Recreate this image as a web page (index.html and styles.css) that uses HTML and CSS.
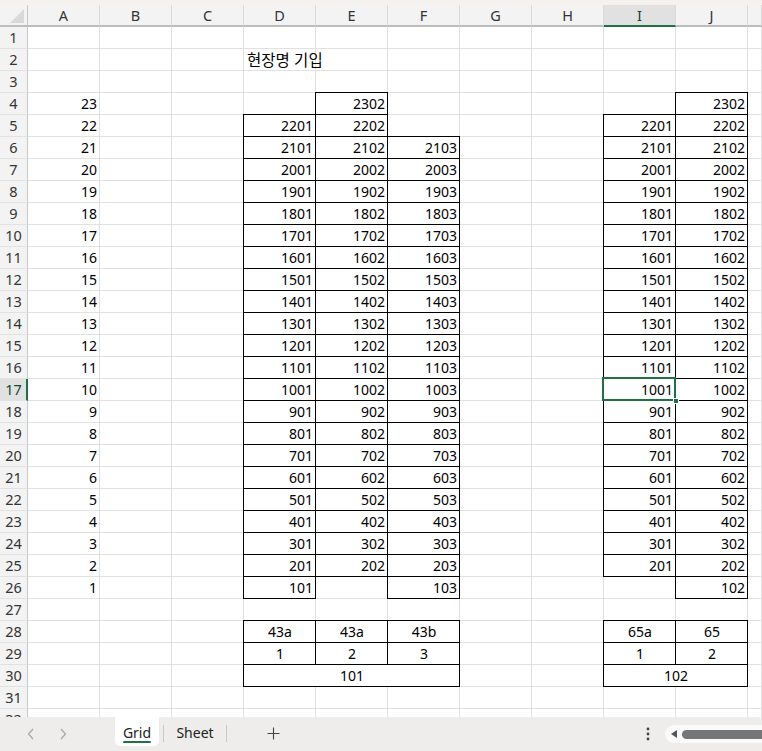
FILE: index.html
```html
<!DOCTYPE html>
<html lang="ko">
<head>
<meta charset="utf-8">
<title>Grid</title>
<link rel="stylesheet" href="styles.css">
</head>
<body>
<div class="app">
  <div class="strip"></div>
  <div class="sheet">
    <div class="corner"><svg width="14" height="14" viewBox="0 0 14 14"><polygon points="14,0 14,14 0,14" fill="#d9d9d9"/></svg></div>
    <div class="ch">A</div><div class="ch">B</div><div class="ch">C</div><div class="ch">D</div><div class="ch">E</div><div class="ch">F</div><div class="ch">G</div><div class="ch">H</div><div class="ch on">I</div><div class="ch">J</div><div class="ch"></div>

    <div class="rh">1</div><div class="c"></div><div class="c"></div><div class="c"></div><div class="c"></div><div class="c"></div><div class="c"></div><div class="c"></div><div class="c"></div><div class="c"></div><div class="c"></div><div class="c"></div>
    <div class="rh">2</div><div class="c"></div><div class="c"></div><div class="c"></div><div class="c t"><span class="ko">현장명 기입</span></div><div class="c"></div><div class="c"></div><div class="c"></div><div class="c"></div><div class="c"></div><div class="c"></div><div class="c"></div>
    <div class="rh">3</div><div class="c"></div><div class="c"></div><div class="c"></div><div class="c"></div><div class="c"></div><div class="c"></div><div class="c"></div><div class="c"></div><div class="c"></div><div class="c"></div><div class="c"></div>
    <div class="rh">4</div><div class="c n">23</div><div class="c"></div><div class="c"></div><div class="c"></div><div class="c n b">2302</div><div class="c"></div><div class="c"></div><div class="c"></div><div class="c"></div><div class="c n b">2302</div><div class="c"></div>
    <div class="rh">5</div><div class="c n">22</div><div class="c"></div><div class="c"></div><div class="c n b">2201</div><div class="c n b">2202</div><div class="c"></div><div class="c"></div><div class="c"></div><div class="c n b">2201</div><div class="c n b">2202</div><div class="c"></div>
    <div class="rh">6</div><div class="c n">21</div><div class="c"></div><div class="c"></div><div class="c n b">2101</div><div class="c n b">2102</div><div class="c n b">2103</div><div class="c"></div><div class="c"></div><div class="c n b">2101</div><div class="c n b">2102</div><div class="c"></div>
    <div class="rh">7</div><div class="c n">20</div><div class="c"></div><div class="c"></div><div class="c n b">2001</div><div class="c n b">2002</div><div class="c n b">2003</div><div class="c"></div><div class="c"></div><div class="c n b">2001</div><div class="c n b">2002</div><div class="c"></div>
    <div class="rh">8</div><div class="c n">19</div><div class="c"></div><div class="c"></div><div class="c n b">1901</div><div class="c n b">1902</div><div class="c n b">1903</div><div class="c"></div><div class="c"></div><div class="c n b">1901</div><div class="c n b">1902</div><div class="c"></div>
    <div class="rh">9</div><div class="c n">18</div><div class="c"></div><div class="c"></div><div class="c n b">1801</div><div class="c n b">1802</div><div class="c n b">1803</div><div class="c"></div><div class="c"></div><div class="c n b">1801</div><div class="c n b">1802</div><div class="c"></div>
    <div class="rh">10</div><div class="c n">17</div><div class="c"></div><div class="c"></div><div class="c n b">1701</div><div class="c n b">1702</div><div class="c n b">1703</div><div class="c"></div><div class="c"></div><div class="c n b">1701</div><div class="c n b">1702</div><div class="c"></div>
    <div class="rh">11</div><div class="c n">16</div><div class="c"></div><div class="c"></div><div class="c n b">1601</div><div class="c n b">1602</div><div class="c n b">1603</div><div class="c"></div><div class="c"></div><div class="c n b">1601</div><div class="c n b">1602</div><div class="c"></div>
    <div class="rh">12</div><div class="c n">15</div><div class="c"></div><div class="c"></div><div class="c n b">1501</div><div class="c n b">1502</div><div class="c n b">1503</div><div class="c"></div><div class="c"></div><div class="c n b">1501</div><div class="c n b">1502</div><div class="c"></div>
    <div class="rh">13</div><div class="c n">14</div><div class="c"></div><div class="c"></div><div class="c n b">1401</div><div class="c n b">1402</div><div class="c n b">1403</div><div class="c"></div><div class="c"></div><div class="c n b">1401</div><div class="c n b">1402</div><div class="c"></div>
    <div class="rh">14</div><div class="c n">13</div><div class="c"></div><div class="c"></div><div class="c n b">1301</div><div class="c n b">1302</div><div class="c n b">1303</div><div class="c"></div><div class="c"></div><div class="c n b">1301</div><div class="c n b">1302</div><div class="c"></div>
    <div class="rh">15</div><div class="c n">12</div><div class="c"></div><div class="c"></div><div class="c n b">1201</div><div class="c n b">1202</div><div class="c n b">1203</div><div class="c"></div><div class="c"></div><div class="c n b">1201</div><div class="c n b">1202</div><div class="c"></div>
    <div class="rh">16</div><div class="c n">11</div><div class="c"></div><div class="c"></div><div class="c n b">1101</div><div class="c n b">1102</div><div class="c n b">1103</div><div class="c"></div><div class="c"></div><div class="c n b">1101</div><div class="c n b">1102</div><div class="c"></div>
    <div class="rh on">17</div><div class="c n">10</div><div class="c"></div><div class="c"></div><div class="c n b">1001</div><div class="c n b">1002</div><div class="c n b">1003</div><div class="c"></div><div class="c"></div><div class="c n b sel">1001<span class="selbox"></span><span class="handle"></span></div><div class="c n b">1002</div><div class="c"></div>
    <div class="rh">18</div><div class="c n">9</div><div class="c"></div><div class="c"></div><div class="c n b">901</div><div class="c n b">902</div><div class="c n b">903</div><div class="c"></div><div class="c"></div><div class="c n b">901</div><div class="c n b">902</div><div class="c"></div>
    <div class="rh">19</div><div class="c n">8</div><div class="c"></div><div class="c"></div><div class="c n b">801</div><div class="c n b">802</div><div class="c n b">803</div><div class="c"></div><div class="c"></div><div class="c n b">801</div><div class="c n b">802</div><div class="c"></div>
    <div class="rh">20</div><div class="c n">7</div><div class="c"></div><div class="c"></div><div class="c n b">701</div><div class="c n b">702</div><div class="c n b">703</div><div class="c"></div><div class="c"></div><div class="c n b">701</div><div class="c n b">702</div><div class="c"></div>
    <div class="rh">21</div><div class="c n">6</div><div class="c"></div><div class="c"></div><div class="c n b">601</div><div class="c n b">602</div><div class="c n b">603</div><div class="c"></div><div class="c"></div><div class="c n b">601</div><div class="c n b">602</div><div class="c"></div>
    <div class="rh">22</div><div class="c n">5</div><div class="c"></div><div class="c"></div><div class="c n b">501</div><div class="c n b">502</div><div class="c n b">503</div><div class="c"></div><div class="c"></div><div class="c n b">501</div><div class="c n b">502</div><div class="c"></div>
    <div class="rh">23</div><div class="c n">4</div><div class="c"></div><div class="c"></div><div class="c n b">401</div><div class="c n b">402</div><div class="c n b">403</div><div class="c"></div><div class="c"></div><div class="c n b">401</div><div class="c n b">402</div><div class="c"></div>
    <div class="rh">24</div><div class="c n">3</div><div class="c"></div><div class="c"></div><div class="c n b">301</div><div class="c n b">302</div><div class="c n b">303</div><div class="c"></div><div class="c"></div><div class="c n b">301</div><div class="c n b">302</div><div class="c"></div>
    <div class="rh">25</div><div class="c n">2</div><div class="c"></div><div class="c"></div><div class="c n b">201</div><div class="c n b">202</div><div class="c n b">203</div><div class="c"></div><div class="c"></div><div class="c n b">201</div><div class="c n b">202</div><div class="c"></div>
    <div class="rh">26</div><div class="c n">1</div><div class="c"></div><div class="c"></div><div class="c n b">101</div><div class="c"></div><div class="c n b">103</div><div class="c"></div><div class="c"></div><div class="c"></div><div class="c n b">102</div><div class="c"></div>
    <div class="rh">27</div><div class="c"></div><div class="c"></div><div class="c"></div><div class="c"></div><div class="c"></div><div class="c"></div><div class="c"></div><div class="c"></div><div class="c"></div><div class="c"></div><div class="c"></div>
    <div class="rh">28</div><div class="c"></div><div class="c"></div><div class="c"></div><div class="c m b">43a</div><div class="c m b">43a</div><div class="c m b">43b</div><div class="c"></div><div class="c"></div><div class="c m b">65a</div><div class="c m b">65</div><div class="c"></div>
    <div class="rh">29</div><div class="c"></div><div class="c"></div><div class="c"></div><div class="c m b">1</div><div class="c m b">2</div><div class="c m b">3</div><div class="c"></div><div class="c"></div><div class="c m b">1</div><div class="c m b">2</div><div class="c"></div>
    <div class="rh">30</div><div class="c"></div><div class="c"></div><div class="c"></div><div class="c m b span3">101</div><div class="c"></div><div class="c"></div><div class="c m b span2">102</div><div class="c"></div>
    <div class="rh">31</div><div class="c"></div><div class="c"></div><div class="c"></div><div class="c"></div><div class="c"></div><div class="c"></div><div class="c"></div><div class="c"></div><div class="c"></div><div class="c"></div><div class="c"></div>
    <div class="rh">32</div><div class="c"></div><div class="c"></div><div class="c"></div><div class="c"></div><div class="c"></div><div class="c"></div><div class="c"></div><div class="c"></div><div class="c"></div><div class="c"></div><div class="c"></div>
  </div>
  <div class="tabbar">
    <div class="nav">
      <span class="arrow"><svg width="8" height="12" viewBox="0 0 8 12"><polyline points="6,1 1.5,6 6,11" fill="none" stroke="#a6a6a6" stroke-width="1.2"/></svg></span>
      <span class="arrow"><svg width="8" height="12" viewBox="0 0 8 12"><polyline points="2,1 6.5,6 2,11" fill="none" stroke="#a6a6a6" stroke-width="1.2"/></svg></span>
    </div>
    <div class="tab active">Grid</div>
    <div class="sep"></div>
    <div class="tab">Sheet</div>
    <div class="sep"></div>
    <div class="plus"><svg width="13" height="13" viewBox="0 0 13 13"><path d="M6.5 0.5v12M0.5 6.5h12" stroke="#444" stroke-width="1.1" fill="none"/></svg></div>
    <div class="more"><svg width="4" height="14" viewBox="0 0 4 14"><circle cx="2" cy="2" r="1.4" fill="#444"/><circle cx="2" cy="7" r="1.4" fill="#444"/><circle cx="2" cy="12" r="1.4" fill="#444"/></svg></div>
    <div class="hscroll">
      <svg class="tri" width="6" height="8" viewBox="0 0 6 8"><polygon points="6,0 6,8 0,4" fill="#555"/></svg>
      <div class="thumb"></div>
    </div>
  </div>
</div>
</body>
</html>
```

FILE: styles.css
```css
* { box-sizing: border-box; }
html, body { margin: 0; padding: 0; background: #fff; }
body { width: 762px; height: 751px; overflow: hidden; font-family: "Noto Sans", "Noto Sans CJK KR", sans-serif; color: #000; }

.app { display: flex; flex-direction: column; height: 751px; }
.strip { height: 5px; background: #f5f1ee; flex: none; }

.sheet {
  flex: 1;
  overflow: hidden;
  display: grid;
  grid-template-columns: 28px repeat(10, 72px) 14px;
  grid-auto-rows: 22px;
}

.corner {
  background: #f3f3f3;
  border-right: 1px solid #c8c8c8;
  border-bottom: 2px solid #bdbdbd;
  display: flex; align-items: flex-end; justify-content: flex-end;
  padding: 0 3px 2px 0;
}
.corner svg { display: block; }

.ch {
  background: #f3f3f3;
  border-right: 1px solid #dadada;
  border-bottom: 2px solid #bdbdbd;
  font-size: 14.5px;
  line-height: 20px;
  text-align: center;
  color: #333;
}
.ch.on { background: #e1e1e1; border-bottom-color: #1e7145; color: #0f4a2c; }

.rh {
  background: #f3f3f3;
  border-right: 1px solid #c8c8c8;
  border-bottom: 1px solid #e1e1e1;
  font-size: 14.5px;
  line-height: 21px;
  text-align: center;
  color: #333;
}
.rh.on { background: #e1e1e1; border-right: 2px solid #1e7145; color: #0f4a2c; padding-left: 1px; }

.c {
  border-right: 1px solid #e1e1e1;
  border-bottom: 1px solid #e1e1e1;
  font-size: 14px;
  line-height: 21px;
  padding: 0 2px 0 3px;
  white-space: nowrap;
  position: relative;
}
.n { text-align: right; }
.m { text-align: center; }
.t { text-align: left; overflow: visible; }
.ko { font-family: "Noto Sans CJK KR", "Noto Sans", sans-serif; font-size: 15.5px; position: relative; }

.b {
  border-right-color: #000;
  border-bottom-color: #000;
  box-shadow: -1px 0 0 #000, 0 -1px 0 #000, -1px -1px 0 #000;
}

.span3 { grid-column: span 3; }
.span2 { grid-column: span 2; }

.sel { z-index: 2; }
.selbox {
  position: absolute;
  left: -2px; top: -2px; right: -1px; bottom: -1px;
  border: 2px solid #1e7145;
  pointer-events: none;
}
.handle {
  position: absolute;
  right: -4px; bottom: -4px;
  width: 6px; height: 6px;
  background: #1e7145;
  border: 1px solid #fff;
}

.tabbar {
  flex: none;
  height: 34px;
  background: #eeedeb;
  display: flex;
  align-items: flex-start;
  font-size: 14px;
  color: #222;
}
.nav { width: 115px; height: 34px; display: flex; align-items: center; padding-left: 27px; gap: 24px; }
.arrow { width: 8px; height: 12px; display: block; }
.arrow svg { display: block; }

.tab { height: 29px; line-height: 31px; padding: 0; text-align: center; }
.tab.active {
  width: 44px;
  background: #fff;
  border-radius: 0 0 5px 5px;
  position: relative;
}
.tab.active::after {
  content: "";
  position: absolute;
  left: 8px; right: 8px; top: 24px;
  height: 2px;
  background: #1e7145;
  border-radius: 1px;
}
.tab:not(.active) { width: 62px; }
.sep { width: 1px; height: 17px; margin-top: 8px; background: #c8c8c8; }
.tab.active + .sep { margin-left: 4px; }
.plus { margin-left: 40px; margin-top: 10px; }
.plus svg { display: block; }
.more { margin-left: auto; margin-top: 10px; margin-right: 15px; }
.more svg { display: block; }
.hscroll {
  width: 97px;
  height: 18px;
  margin-top: 8px;
  background: #fafafa;
  border-radius: 9px 0 0 9px;
  display: flex;
  align-items: center;
  padding-left: 6px;
}
.tri { display: block; flex: none; }
.thumb { flex: 1; height: 9px; margin-left: 5px; background: #767676; border-radius: 5px 0 0 5px; }
```
